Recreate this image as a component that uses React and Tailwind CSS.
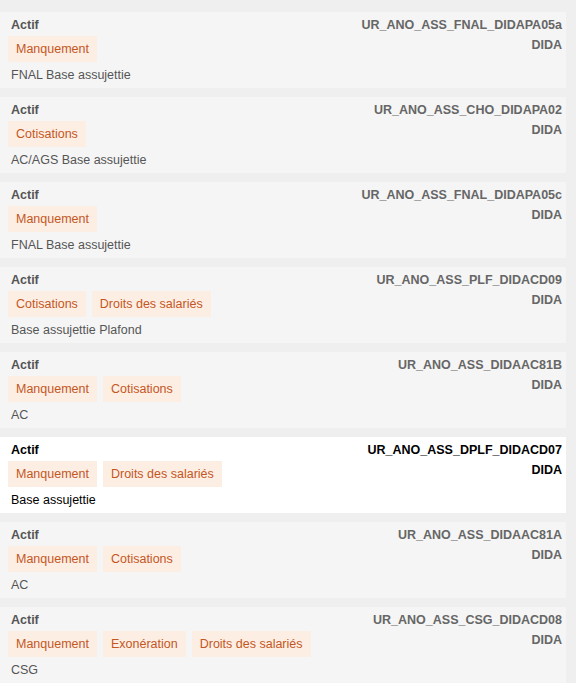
const items = [
  { tags: ['Manquement'], desc: 'FNAL Base assujettie', code: 'UR_ANO_ASS_FNAL_DIDAPA05a' },
  { tags: ['Cotisations'], desc: 'AC/AGS Base assujettie', code: 'UR_ANO_ASS_CHO_DIDAPA02' },
  { tags: ['Manquement'], desc: 'FNAL Base assujettie', code: 'UR_ANO_ASS_FNAL_DIDAPA05c' },
  { tags: ['Cotisations', 'Droits des salariés'], desc: 'Base assujettie Plafond', code: 'UR_ANO_ASS_PLF_DIDACD09' },
  { tags: ['Manquement', 'Cotisations'], desc: 'AC', code: 'UR_ANO_ASS_DIDAAC81B' },
  { tags: ['Manquement', 'Droits des salariés'], desc: 'Base assujettie', code: 'UR_ANO_ASS_DPLF_DIDACD07', active: true },
  { tags: ['Manquement', 'Cotisations'], desc: 'AC', code: 'UR_ANO_ASS_DIDAAC81A' },
  { tags: ['Manquement', 'Exonération', 'Droits des salariés'], desc: 'CSG', code: 'UR_ANO_ASS_CSG_DIDACD08' },
];

const Rule = ({ item }) => (
  <div
    className={`flex justify-between h-[76px] ${
      item.active ? 'bg-white text-black' : 'bg-[#f5f5f5] text-[#555]'
    }`}
  >
    <div className="pl-2 pt-[5px]">
      <div className="pl-[3px] leading-4 font-bold">Actif</div>
      <div className="mt-[3px] flex gap-1.5">
        {item.tags.map((t) => (
          <span key={t} className="h-[26px] leading-[27px] px-2 bg-[#fdeee4] text-[#c4571f]">
            {t}
          </span>
        ))}
      </div>
      <div className="mt-[5px] pl-[3px] leading-4">{item.desc}</div>
    </div>
    <div className={`pr-1 pt-[3px] text-right font-bold leading-5 ${item.active ? 'text-black' : 'text-[#666]'}`}>
      <div>{item.code}</div>
      <div>DIDA</div>
    </div>
  </div>
);

export default function App() {
  return (
    <div className="min-h-screen bg-[#efefef] pt-3 pr-[10px] flex flex-col gap-[9px] text-[12.5px] font-['Liberation_Sans',sans-serif]">
      {items.map((item) => (
        <Rule key={item.code} item={item} />
      ))}
    </div>
  );
}
